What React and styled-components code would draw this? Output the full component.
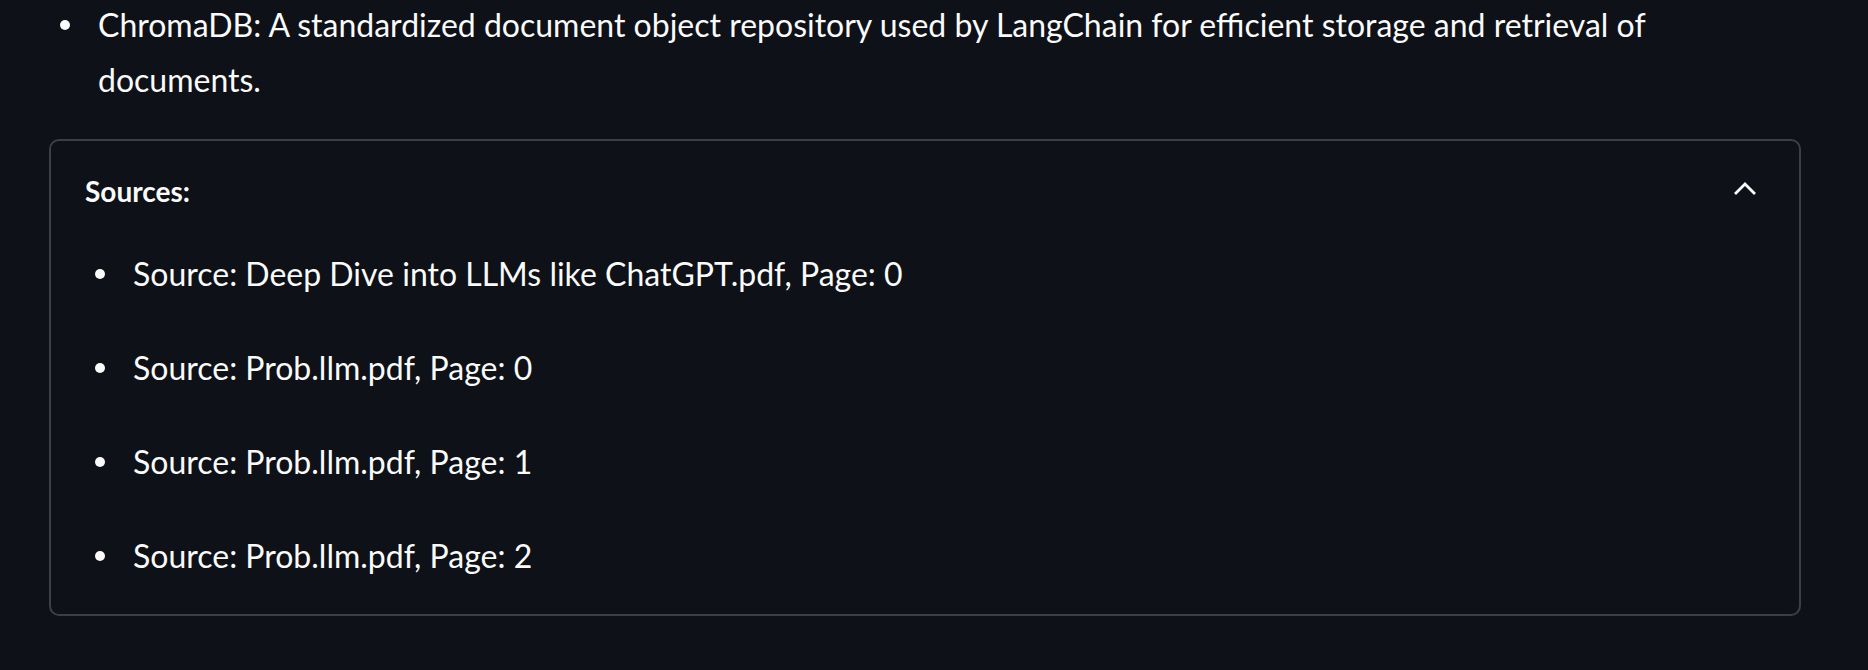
import React from "react";
import styled, { createGlobalStyle } from "styled-components";

const GlobalStyle = createGlobalStyle`
  html, body {
    margin: 0;
    padding: 0;
    background-color: #0e1117;
  }
  body {
    font-family: "Source Sans Pro", Lato, "Noto Sans", sans-serif;
    color: #fafafa;
  }
`;

const Page = styled.div`
  width: 1868px;
  height: 670px;
  overflow: hidden;
  background-color: #0e1117;
  padding: 0 67px 0 49px;
  margin-top: -3px;
  box-sizing: border-box;
  display: flex;
  flex-direction: column;
  gap: 32px;
`;

const List = styled.ul`
  list-style: none;
  margin: 0;
  padding: ${(p) => p.top || 0}px 0 0 ${(p) => p.indent}px;
  display: flex;
  flex-direction: column;
  gap: ${(p) => p.gap || 0}px;
`;

const Item = styled.li`
  display: grid;
  grid-template-columns: 38px 1fr;
  font-size: 32px;
  line-height: 55px;
  color: #fafafa;
`;

const Text = styled.span`
  max-width: ${(p) => p.max || 2000}px;
`;

const Marker = styled.span`
  height: 55px;
  display: flex;
  align-items: center;

  &::before {
    content: "";
    width: 10px;
    height: 10px;
    border-radius: 50%;
    background-color: #fafafa;
  }
`;

const Expander = styled.div`
  border: 2px solid rgba(250, 250, 250, 0.2);
  border-radius: 10px;
  padding-bottom: 31px;
`;

const Header = styled.div`
  height: 99px;
  display: flex;
  align-items: center;
  justify-content: space-between;
  padding: 0 43px 0 34px;
`;

const Label = styled.span`
  font-size: 28px;
  font-weight: 700;
  color: #fafafa;
`;

const ChevronBox = styled.span`
  display: flex;
  margin-bottom: 5px;
`;

const Chevron = () => (
  <ChevronBox>
    <svg width="22" height="14" viewBox="0 0 22 14" fill="none">
      <polyline
        points="2,12 11,3 20,12"
        stroke="#fafafa"
        strokeWidth="2.8"
        strokeLinecap="square"
      />
    </svg>
  </ChevronBox>
);

const sources = [
  "Source: Deep Dive into LLMs like ChatGPT.pdf, Page: 0",
  "Source: Prob.llm.pdf, Page: 0",
  "Source: Prob.llm.pdf, Page: 1",
  "Source: Prob.llm.pdf, Page: 2",
];

const App = () => {
  return (
    <>
      <GlobalStyle />
      <Page>
        <List indent={11}>
          <Item>
            <Marker />
            <Text max={1600}>
              ChromaDB: A standardized document object repository used by
              LangChain for efficient storage and retrieval of documents.
            </Text>
          </Item>
        </List>
        <Expander>
          <Header>
            <Label>Sources:</Label>
            <Chevron />
          </Header>
          <List indent={44} gap={39} top={6}>
            {sources.map((s) => (
              <Item key={s}>
                <Marker />
                <Text>{s}</Text>
              </Item>
            ))}
          </List>
        </Expander>
      </Page>
    </>
  );
};

export default App;
